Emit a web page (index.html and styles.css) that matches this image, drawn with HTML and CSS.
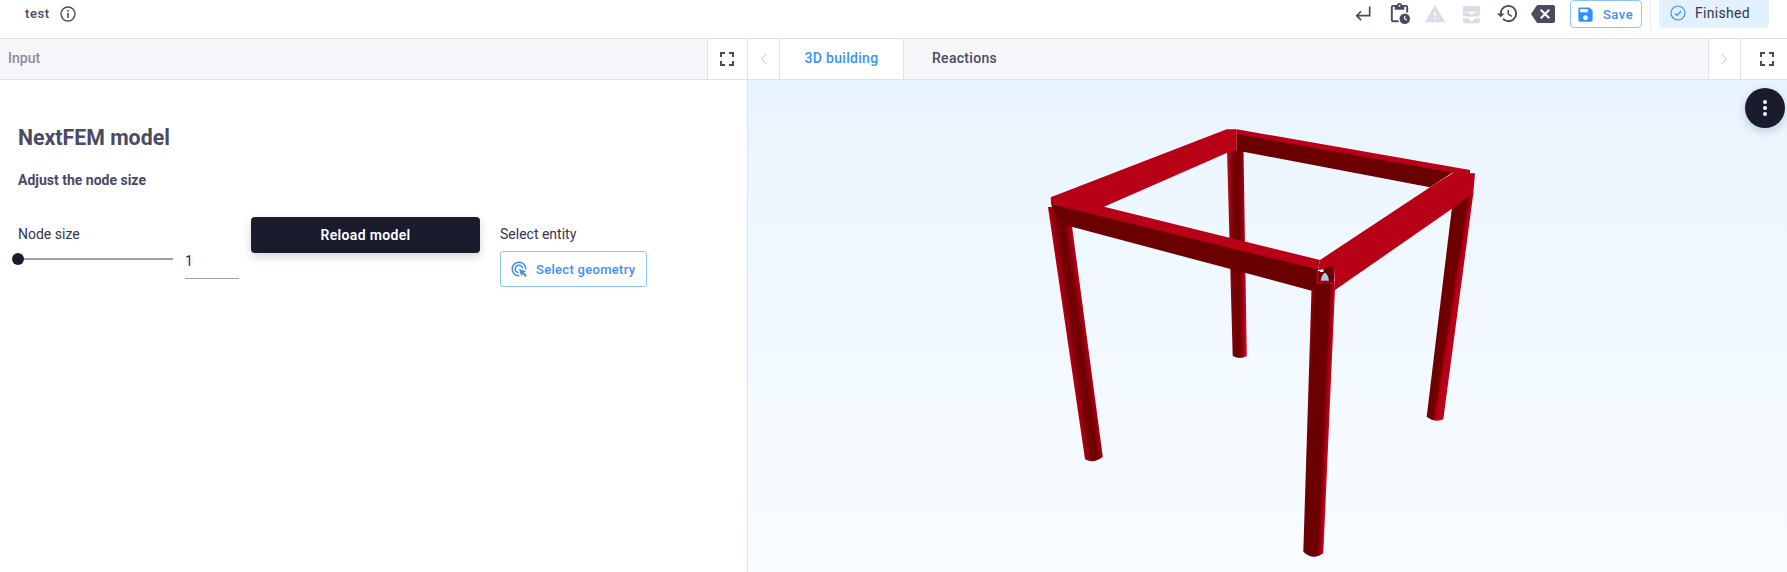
FILE: index.html
```html
<!DOCTYPE html>
<html lang="en">
<head>
<meta charset="utf-8">
<title>NextFEM model</title>
<link rel="stylesheet" href="styles.css">
</head>
<body>
<header class="topbar">
  <div class="top-left">
    <span class="doc-name">test</span>
    <svg class="info-icon" viewBox="0 0 16 16"><circle cx="8" cy="8" r="7" fill="none" stroke="#4a4a63" stroke-width="1.4"/><rect x="7.2" y="7" width="1.6" height="5" fill="#4a4a63"/><rect x="7.2" y="4" width="1.6" height="1.7" fill="#4a4a63"/></svg>
  </div>
  <div class="top-right">
    <svg class="tool tool-return" viewBox="0 0 24 24"><path class="ic-dark" d="M19 3v10H6.800l3.600-3.600L9 8l-6 6 6 6 1.400-1.400L6.800 15H21V3z"/></svg>
    <svg class="tool tool-clip" viewBox="0 0 24 24"><path class="ic-dark" d="M19 3h-4.180C14.400 1.840 13.300 1 12 1s-2.400.84-2.820 2H5c-1.100 0-2 .9-2 2v14c0 1.100.9 2 2 2h6v-2H5V5h2v3h10V5h2v6h2V5c0-1.100-.9-2-2-2zm-7 0c.55 0 1 .45 1 1s-.45 1-1 1-1-.45-1-1 .45-1 1-1z"/><circle class="ic-dark" cx="17.5" cy="17.5" r="5.5"/><path d="M17.500 14.500v3.200l2.200 1.200" fill="none" stroke="#fff" stroke-width="1.2"/></svg>
    <svg class="tool tool-warn" viewBox="0 0 24 24"><path class="ic-light" d="M1 21h22L12 2 1 21zm12-3h-2v-2h2v2zm0-4h-2v-4h2v4z"/></svg>
    <svg class="tool tool-inbox" viewBox="0 0 24 24"><path class="ic-light" d="M5 3h14c1.100 0 2 .9 2 2v7c0 1.100-.9 2-2 2H5c-1.100 0-2-.9-2-2V5c0-1.100.9-2 2-2zm0 6v1h4.200c.5 1.200 1.500 2 2.800 2s2.300-.8 2.800-2H19V9z"/><path class="ic-light" d="M15 16h6v3c0 1.100-.9 2-2 2H5c-1.100 0-2-.9-2-2v-3h6c0 1.660 1.340 3 3 3s3-1.340 3-3z"/></svg>
    <svg class="tool tool-history" viewBox="0 0 24 24"><path class="ic-dark" d="M13 3c-4.970 0-9 4.030-9 9H1l3.890 3.890.07.14L9 12H6c0-3.870 3.130-7 7-7s7 3.130 7 7-3.130 7-7 7c-1.930 0-3.680-.79-4.940-2.060l-1.420 1.420C8.270 19.990 10.510 21 13 21c4.970 0 9-4.030 9-9s-4.030-9-9-9zm-1 5v5l4.280 2.540.72-1.210-3.500-2.080V8H12z"/></svg>
    <svg class="tool tool-back" viewBox="0 0 24 24"><path class="ic-dark" d="M22 3H7c-.69 0-1.230.35-1.590.88L0 12l5.410 8.110c.36.53.9.89 1.590.89h15c1.100 0 2-.9 2-2V5c0-1.100-.9-2-2-2zm-3 12.590L17.590 17 14 13.410 10.410 17 9 15.590 12.590 12 9 8.410 10.410 7 14 10.590 17.590 7 19 8.410 15.410 12 19 15.590z"/></svg>
    <button class="save-btn">
      <svg class="save-icon" viewBox="0 0 24 24"><path d="M17 3H5c-1.110 0-2 .9-2 2v14c0 1.100.89 2 2 2h14c1.100 0 2-.9 2-2V7l-4-4zm-5 16c-1.660 0-3-1.340-3-3s1.340-3 3-3 3 1.340 3 3-1.340 3-3 3zm3-10H5V5h10v4z"/></svg>
      <span>Save</span>
    </button>
    <span class="divider"></span>
    <div class="status-chip">
      <svg class="status-icon" viewBox="0 0 16 16"><circle cx="8" cy="8" r="7" fill="none" stroke="#2f90ff" stroke-width="1.2"/><path d="M4.800 8.300l2.200 2.200 4.200-4.500" fill="none" stroke="#2f90ff" stroke-width="1.200"/></svg>
      <span>Finished</span>
    </div>
  </div>
</header>

<nav class="tabrow">
  <div class="tabs-left">
    <span class="pane-title">Input</span>
    <div class="cell cell-full">
      <svg class="full-icon" viewBox="0 0 24 24"><path d="M7 14H5v5h5v-2H7v-3zm-2-4h2V7h3V5H5v5zm12 7h-3v2h5v-5h-2v3zM14 5v2h3v3h2V5h-5z"/></svg>
    </div>
  </div>
  <div class="tabs-right">
    <div class="cell cell-chev">
      <svg class="chev" viewBox="0 0 8 12"><path d="M6.500 1L1.500 6l5 5" fill="none" stroke="#dcdce8" stroke-width="1.300"/></svg>
    </div>
    <div class="tab tab-active">3D building</div>
    <div class="tab">Reactions</div>
    <div class="tab-spacer"></div>
    <div class="cell cell-chev cell-chev-right">
      <svg class="chev" viewBox="0 0 8 12"><path d="M1.500 1l5 5-5 5" fill="none" stroke="#dcdce8" stroke-width="1.300"/></svg>
    </div>
    <div class="cell cell-full cell-full-right">
      <svg class="full-icon" viewBox="0 0 24 24"><path d="M7 14H5v5h5v-2H7v-3zm-2-4h2V7h3V5H5v5zm12 7h-3v2h5v-5h-2v3zM14 5v2h3v3h2V5h-5z"/></svg>
    </div>
  </div>
</nav>

<main class="workspace">
  <section class="input-pane">
    <h1 class="title">NextFEM model</h1>
    <h2 class="subtitle">Adjust the node size</h2>
    <div class="controls">
      <div class="field-slider">
        <div class="field-label">Node size</div>
        <div class="slider-row">
          <div class="slider"><span class="thumb"></span></div>
          <div class="num-input">1</div>
        </div>
      </div>
      <button class="reload-btn">Reload model</button>
      <div class="field-entity">
        <div class="field-label">Select entity</div>
        <button class="geom-btn">
          <svg class="geom-icon" viewBox="0 0 24 24"><path d="M11.710 17.990C8.530 17.840 6 15.220 6 12c0-3.310 2.690-6 6-6 3.220 0 5.840 2.530 5.990 5.710l-2.100-.63C15.480 9.310 13.890 8 12 8c-2.210 0-4 1.790-4 4 0 1.890 1.310 3.480 3.080 3.890l.63 2.100zM22 12c0 .3-.01.6-.04.9l-1.970-.59c.01-.1.01-.21.01-.31 0-4.420-3.580-8-8-8s-8 3.580-8 8 3.580 8 8 8c.1 0 .21 0 .31-.01l.59 1.970c-.3.03-.6.04-.9.04-5.520 0-10-4.480-10-10S6.480 2 12 2s10 4.480 10 10zm-3.770 4.260L22 15l-10-3 3 10 1.260-3.770 4.270 4.270 1.980-1.980-4.280-4.260z"/></svg>
          <span>Select geometry</span>
        </button>
      </div>
    </div>
  </section>

  <section class="viewer">
    <svg class="scene" viewBox="748 80 1039 492" preserveAspectRatio="none">
      <defs>
        <linearGradient id="colBack" gradientUnits="userSpaceOnUse" x1="1229" y1="250" x2="1245" y2="250">
          <stop offset="0" stop-color="#a50a1a"/><stop offset=".25" stop-color="#7a0008"/><stop offset=".6" stop-color="#6b0000"/><stop offset=".9" stop-color="#a00010"/><stop offset="1" stop-color="#c00a20"/>
        </linearGradient>
        <linearGradient id="colLeft" gradientUnits="userSpaceOnUse" x1="1067" y1="335" x2="1088" y2="332">
          <stop offset="0" stop-color="#b00015"/><stop offset=".3" stop-color="#7a0008"/><stop offset=".55" stop-color="#6b0000"/><stop offset=".85" stop-color="#a80014"/><stop offset="1" stop-color="#c20a20"/>
        </linearGradient>
        <linearGradient id="colFront" gradientUnits="userSpaceOnUse" x1="1307" y1="420" x2="1329" y2="421">
          <stop offset="0" stop-color="#8a0010"/><stop offset=".1" stop-color="#6b0000"/><stop offset=".72" stop-color="#6b0000"/><stop offset=".92" stop-color="#b00016"/><stop offset="1" stop-color="#c00a20"/>
        </linearGradient>
        <linearGradient id="colRight" gradientUnits="userSpaceOnUse" x1="1434" y1="310" x2="1453" y2="313">
          <stop offset="0" stop-color="#9a0012"/><stop offset=".15" stop-color="#6b0000"/><stop offset=".8" stop-color="#6f0000"/><stop offset="1" stop-color="#b80018"/>
        </linearGradient>
      </defs>
      <path fill="url(#colBack)" d="M1227 150L1243.500 150L1246.800 356Q1240 360 1232.700 356Z"/>
      <path fill="url(#colLeft)" d="M1048 207L1058 207L1072 226L1102.800 456.700Q1094 464 1085 459.300Z"/>
      <path fill="url(#colRight)" d="M1452 207L1473.500 192L1443.300 419.300Q1435 423 1426.700 416.700Z"/>
      <path class="beam-dark" d="M1236.700 133L1453.300 172L1430 187.300L1243.300 151.700L1236.700 150.700Z"/>
      <path class="beam-dark" d="M1051 203L1318 268L1318 283L1311.700 290.700L1071.700 226.700L1060 223.500L1052 207Z"/>
      <path class="beam-bright" d="M1050.700 197.300L1226.700 129.300L1236.700 129.300L1236.700 150.700L1226.700 153L1104 206.700L1320 260L1318 269.500L1051 204Z"/>
      <path class="beam-bright" d="M1236.700 129.300L1470 170L1470 173.300L1475 173.300L1473.300 193.300L1452.700 208.300L1335 290L1334 268L1318 270L1320 260L1430 187.300L1453.300 172.700L1236.700 134Z"/>
      <path fill="url(#colFront)" d="M1311.500 290L1316 281L1334.500 281L1335 289L1323.300 553.300Q1313 561 1303.300 551.700Z"/>
      <path class="beam-bright" d="M1316.500 271H1320V281H1333V283.500H1316.500Z"/>
      <path class="beam-dark" d="M1318.500 272H1323.500V267H1334V281.500H1318.500Z"/>
      <path d="M1320.700 280.700Q1322 273.500 1325 272.700Q1328 274 1329 280.700Z" fill="#a8c6de"/>
    </svg>
    <button class="fab"><span></span><span></span><span></span></button>
  </section>
</main>
</body>
</html>
```

FILE: styles.css
```css
* {
  box-sizing: border-box;
}

html,
body {
  margin: 0;
  height: 100%;
}

body {
  width: 1787px;
  height: 572px;
  overflow: hidden;
  display: flex;
  flex-direction: column;
  background: #fff;
  font-family: Roboto, "Liberation Sans", sans-serif;
  color: #4a4a63;
}

button {
  font-family: inherit;
  cursor: pointer;
}

/* top bar */
.topbar {
  flex: 0 0 39px;
  display: flex;
  justify-content: space-between;
  border-bottom: 1px solid #e0e0e6;
}

.top-left {
  display: flex;
  align-items: flex-start;
  padding: 6px 0 0 25px;
}

.doc-name {
  font-size: 13px;
  font-weight: 500;
  line-height: 16px;
  letter-spacing: 0.6px;
}

.info-icon {
  width: 16px;
  height: 16px;
  margin-left: 10px;
}

.top-right {
  display: flex;
  align-items: flex-start;
  padding-right: 18px;
}

.tool {
  display: block;
  flex: none;
}

.ic-dark {
  fill: #4a4a63;
}

.ic-light {
  fill: #dcdce8;
}

.tool-return {
  width: 20px;
  height: 20px;
  margin-top: 4px;
}

.tool-clip {
  width: 23px;
  height: 23px;
  margin: 2px 0 0 15px;
}

.tool-warn {
  width: 22px;
  height: 22px;
  margin: 3px 0 0 13px;
}

.tool-inbox {
  width: 23px;
  height: 23px;
  margin: 3px 0 0 14px;
}

.tool-history {
  width: 23px;
  height: 23px;
  margin: 2px 0 0 13px;
}

.tool-back {
  width: 24px;
  height: 24px;
  margin: 2px 0 0 12px;
}

.save-btn {
  width: 72px;
  height: 28px;
  margin-left: 15px;
  padding: 0 0 0 5px;
  display: flex;
  align-items: center;
  background: #fff;
  border: 1px solid #8cc4ff;
  border-radius: 4px;
  color: #3d8fff;
  font-size: 13px;
  font-weight: 500;
  letter-spacing: 0.5px;
}

.save-icon {
  width: 19px;
  height: 19px;
  margin-right: 8px;
  fill: #2f90ff;
}

.divider {
  width: 1px;
  height: 30px;
  margin-left: 8px;
  background: #eeeef2;
}

.status-chip {
  width: 110px;
  height: 28px;
  margin-left: 8px;
  padding: 0 0 2px 11px;
  display: flex;
  align-items: center;
  background: #e3f1ff;
  border-radius: 0 0 4px 4px;
  font-size: 14px;
  letter-spacing: 0.3px;
  color: #33364a;
}

.status-icon {
  width: 16px;
  height: 16px;
  margin-right: 9px;
}

/* tab row */
.tabrow {
  flex: 0 0 41px;
  display: flex;
  background: #f6f6fb;
  border-bottom: 1px solid #e0e0e6;
}

.tabs-left {
  flex: 0 0 748px;
  display: flex;
  justify-content: space-between;
  align-items: stretch;
}

.pane-title {
  padding-left: 8px;
  font-size: 14px;
  font-weight: 500;
  line-height: 39px;
  color: #8c8c96;
}

.tabs-right {
  flex: 1;
  display: flex;
  align-items: stretch;
}

.cell {
  display: flex;
  align-items: center;
  justify-content: center;
  background: #fff;
}

.cell-full {
  width: 41px;
  padding-right: 1px;
  border-left: 1px solid #e0e0e6;
  border-right: 1px solid #e0e0e6;
}

.cell-full-right {
  width: 47px;
  padding: 0 0 0 5px;
  border-right: 0;
}

.cell-chev {
  width: 32px;
  border-right: 1px solid #e0e0e6;
}

.cell-chev-right {
  width: 32px;
  padding-right: 1px;
  border-left: 1px solid #e0e0e6;
  border-right: 0;
}

.full-icon {
  width: 24px;
  height: 24px;
  fill: #4a4a63;
}

.chev {
  width: 8px;
  height: 12px;
}

.tab {
  padding: 0 29px 0 28px;
  font-size: 14px;
  font-weight: 500;
  letter-spacing: 0.3px;
  line-height: 39px;
  border-right: 0;
}

.tab-active {
  width: 124px;
  padding: 0;
  text-align: center;
  background: #fff;
  color: #3d8fff;
  border-right: 1px solid #e0e0e6;
}

.tab-spacer {
  flex: 1;
}

/* main */
.workspace {
  flex: 1;
  display: flex;
  min-height: 0;
}

.input-pane {
  flex: 0 0 748px;
  padding: 45px 18px 0;
  border-right: 1px solid #e0e0e6;
}

.title {
  margin: 0;
  font-size: 21.3px;
  font-weight: 700;
  line-height: 26px;
}

.subtitle {
  margin: 20px 0 0;
  font-size: 14px;
  font-weight: 700;
  line-height: 18px;
}

.controls {
  margin-top: 28px;
  display: flex;
  align-items: flex-start;
}

.field-label {
  font-size: 14px;
  line-height: 18px;
  color: #33364a;
}

.field-slider {
  width: 233px;
  padding-top: 8px;
}

.slider-row {
  display: flex;
  align-items: flex-start;
}

.slider {
  position: relative;
  width: 155px;
  height: 2px;
  margin-top: 15px;
  background: #a0a0a8;
}

.thumb {
  position: absolute;
  left: -6px;
  top: -5px;
  width: 12px;
  height: 12px;
  border-radius: 50%;
  background: #1a1c2e;
}

.num-input {
  width: 54px;
  height: 28px;
  margin: 8px 0 0 12px;
  padding-top: 1px;
  border-bottom: 1px solid #a0a0a8;
  font-size: 14px;
  line-height: 18px;
  color: #1d2a66;
}

.reload-btn {
  width: 229px;
  height: 36px;
  padding: 0;
  border: 0;
  border-radius: 4px;
  background: #1a1c2e;
  color: #fff;
  font-size: 14px;
  font-weight: 600;
  letter-spacing: 0.35px;
  box-shadow: 0 4px 10px rgba(26, 28, 46, 0.18);
}

.field-entity {
  margin-left: 20px;
  padding-top: 8px;
}

.geom-btn {
  width: 147px;
  height: 36px;
  margin-top: 8px;
  padding: 0 0 0 9px;
  display: flex;
  align-items: center;
  background: #fff;
  border: 1px solid #8cc4ff;
  border-radius: 3px;
  color: #3d8fff;
  font-size: 13px;
  font-weight: 500;
  letter-spacing: 0.3px;
}

.geom-icon {
  width: 18px;
  height: 18px;
  margin-right: 8px;
  fill: #3d8fff;
}

/* viewer */
.viewer {
  position: relative;
  flex: 1;
  background: linear-gradient(180deg, #e7f3fe 0%, #edf6ff 15%, #f1f8ff 50%, #f8fcff 100%);
}

.scene {
  display: block;
  width: 100%;
  height: 100%;
}

.beam-bright {
  fill: #b80017;
}

.beam-dark {
  fill: #6b0000;
}

.fab {
  position: absolute;
  top: 8px;
  right: 2px;
  width: 40px;
  height: 40px;
  padding: 0;
  border: 0;
  border-radius: 50%;
  background: #1a1c2e;
  display: flex;
  flex-direction: column;
  align-items: center;
  justify-content: center;
  gap: 2px;
  box-shadow: 0 3px 10px rgba(26, 28, 46, 0.2);
}

.fab span {
  width: 4px;
  height: 4px;
  border-radius: 50%;
  background: #fff;
}
```
